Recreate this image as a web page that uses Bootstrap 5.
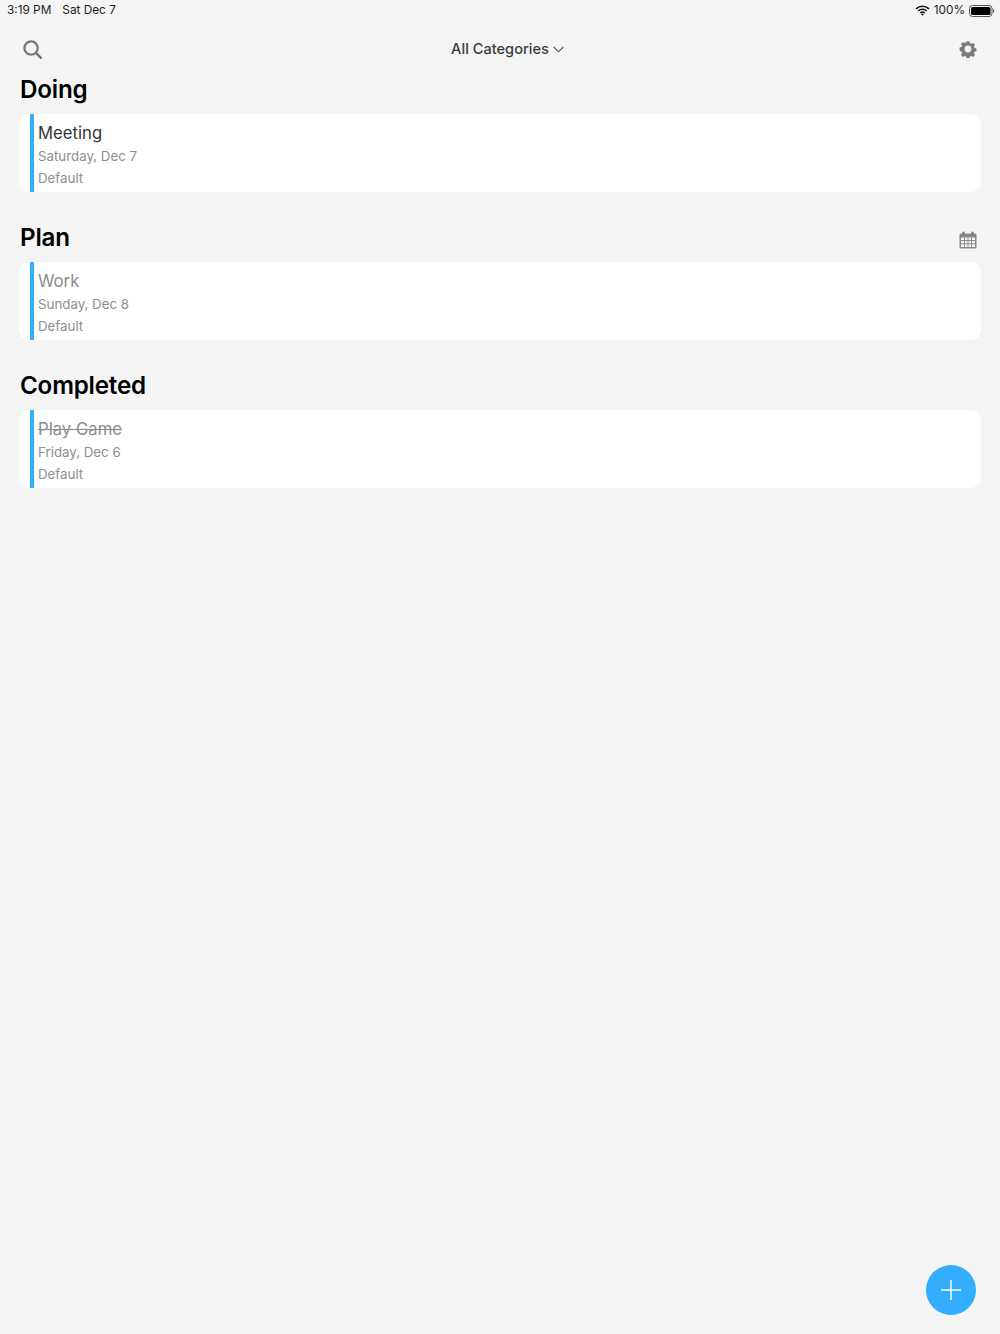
<!DOCTYPE html>
<html lang="en">
<head>
    <meta charset="UTF-8">
    <meta name="viewport" content="width=device-width, initial-scale=1.0">
    <title>Tasks</title>
    <link href="https://cdn.jsdelivr.net/npm/bootstrap@5.3.0/dist/css/bootstrap.min.css" rel="stylesheet">
    <style>
        body {
            background-color: #f4f4f4;
            font-family: Inter, "Liberation Sans", sans-serif;
            height: 1334px;
            overflow: hidden;
        }
        .status-bar {
            height: 20px;
            padding: 1px 5px 0 7px;
            font-size: 11.8px;
            color: #1c1c1c;
        }
        .status-date {
            margin-left: 3px;
        }
        .top-bar {
            height: 50px;
            padding: 8px 23px 0;
        }
        .category-pick {
            font-size: 14.6px;
            font-weight: 500;
            color: #3a3a3a;
            margin-left: 14px;
            padding-top: 2px;
        }
        .task-section {
            padding: 0 19px;
            height: 148px;
        }
        .section-head {
            height: 44px;
            padding: 0 4px 4px 0;
        }
        .section-title {
            font-size: 24.2px;
            font-weight: 600;
            color: #000;
            margin: 0;
            padding-left: 1px;
            letter-spacing: -0.2px;
        }
        .cal-icon {
            margin-top: 4px;
        }
        .task-card {
            height: 78px;
            border: 0;
            border-radius: 10px;
            padding-left: 11px;
        }
        .task-accent {
            width: 4px;
            background-color: #33aeff;
        }
        .task-body {
            padding-left: 4px;
            padding-top: 8px;
        }
        .task-title {
            font-size: 16.7px;
            line-height: 22px;
            margin-bottom: 1px;
            color: #333;
        }
        .task-title.is-muted { color: #8c8c8c; }
        .task-title.is-done {
            color: #8c8c8c;
            text-decoration: line-through;
        }
        .task-meta {
            font-size: 13.3px;
            line-height: 22px;
            color: #8e8e8e;
        }
        .add-fab {
            position: fixed;
            left: 926px;
            top: 1265px;
            width: 50px;
            height: 50px;
            background-color: #33aeff;
            border: 0;
            padding: 0;
        }
    </style>
</head>
<body>
    <div class="status-bar d-flex align-items-center justify-content-between">
        <div class="d-flex gap-2">
            <span>3:19 PM</span>
            <span class="status-date">Sat Dec 7</span>
        </div>
        <div class="d-flex align-items-center gap-1">
            <svg width="15" height="11" viewBox="0 0 16 12">
                <path d="M1 4.2a10 10 0 0 1 14 0M3.4 6.6a6.6 6.6 0 0 1 9.2 0M5.6 8.8a3.4 3.4 0 0 1 4.8 0" fill="none" stroke="#111" stroke-width="1.7"/>
                <path d="M8 11.8l-1.6-1.7a2.2 2.2 0 0 1 3.2 0z" fill="#111"/>
            </svg>
            <span>100%</span>
            <svg width="26" height="12" viewBox="0 0 26 12">
                <rect x="0.5" y="0.5" width="22.5" height="11" rx="3" fill="none" stroke="#555"/>
                <rect x="2" y="2" width="19.5" height="8" rx="1.6" fill="#000"/>
                <path d="M24 4v4a2 2 0 0 0 1.2-2A2 2 0 0 0 24 4z" fill="#555"/>
            </svg>
        </div>
    </div>

    <div class="top-bar d-flex align-items-center justify-content-between">
        <svg width="19" height="19" viewBox="0 0 20 20">
            <circle cx="8.5" cy="8.5" r="7" fill="none" stroke="#777" stroke-width="2.4"/>
            <path d="M13.6 13.6L18.8 18.8" stroke="#777" stroke-width="2.8" stroke-linecap="round"/>
        </svg>
        <div class="category-pick d-flex align-items-center gap-1">
            All Categories
            <svg width="11" height="7" viewBox="0 0 11 7">
                <path d="M0.7 1L5.5 5.8L10.3 1" fill="none" stroke="#555" stroke-width="1.1"/>
            </svg>
        </div>
        <svg width="18" height="18" viewBox="0 0 18 18">
            <path d="M7.4 0.4h3.2l.5 2.2 1.5.7 2-1.1 2.2 2.2-1.2 1.9.7 1.6 2.1.5v3.2l-2.1.5-.7 1.6 1.2 1.9-2.2 2.2-2-1.1-1.5.7-.5 2.2H7.4l-.5-2.2-1.5-.7-2 1.1-2.2-2.2 1.2-1.9-.7-1.6L-.4 10.6V7.4l2.1-.5.7-1.6-1.2-1.9 2.2-2.2 2 1.1 1.5-.7z" fill="#7b7b7b" transform="translate(0.9 0.9) scale(0.9)"/>
            <circle cx="9" cy="9" r="3.4" fill="#f4f4f4"/>
        </svg>
    </div>

    <section class="task-section">
        <div class="section-head d-flex align-items-center justify-content-between">
            <h2 class="section-title">Doing</h2>
        </div>
        <div class="card task-card flex-row">
            <div class="task-accent"></div>
            <div class="task-body">
                <div class="task-title">Meeting</div>
                <div class="task-meta">Saturday, Dec 7</div>
                <div class="task-meta">Default</div>
            </div>
        </div>
    </section>

    <section class="task-section">
        <div class="section-head d-flex align-items-center justify-content-between">
            <h2 class="section-title">Plan</h2>
            <svg class="cal-icon" width="18" height="18" viewBox="0 0 18 18">
                <rect x="0.5" y="2.5" width="17" height="15" rx="1.5" fill="#8a8a8a"/>
                <rect x="3.5" y="0.5" width="2" height="4" rx="1" fill="#777"/>
                <rect x="12.5" y="0.5" width="2" height="4" rx="1" fill="#777"/>
                <rect x="2" y="6.5" width="14" height="9.5" fill="#f4f4f4"/>
                <path d="M2 9.5h14M2 12.8h14M5.5 6.5V16M9 6.5V16M12.5 6.5V16" stroke="#8a8a8a" stroke-width="1"/>
            </svg>
        </div>
        <div class="card task-card flex-row">
            <div class="task-accent"></div>
            <div class="task-body">
                <div class="task-title is-muted">Work</div>
                <div class="task-meta">Sunday, Dec 8</div>
                <div class="task-meta">Default</div>
            </div>
        </div>
    </section>

    <section class="task-section">
        <div class="section-head d-flex align-items-center justify-content-between">
            <h2 class="section-title">Completed</h2>
        </div>
        <div class="card task-card flex-row">
            <div class="task-accent"></div>
            <div class="task-body">
                <div class="task-title is-done">Play Game</div>
                <div class="task-meta">Friday, Dec 6</div>
                <div class="task-meta">Default</div>
            </div>
        </div>
    </section>

    <button class="btn add-fab rounded-circle d-flex align-items-center justify-content-center" type="button" aria-label="Add">
        <svg width="20" height="20" viewBox="0 0 20 20">
            <path d="M10 0V20M0 10H20" stroke="#fff" stroke-width="1.4"/>
        </svg>
    </button>

    <script src="https://cdn.jsdelivr.net/npm/bootstrap@5.3.0/dist/js/bootstrap.bundle.min.js"></script>
</body>
</html>
